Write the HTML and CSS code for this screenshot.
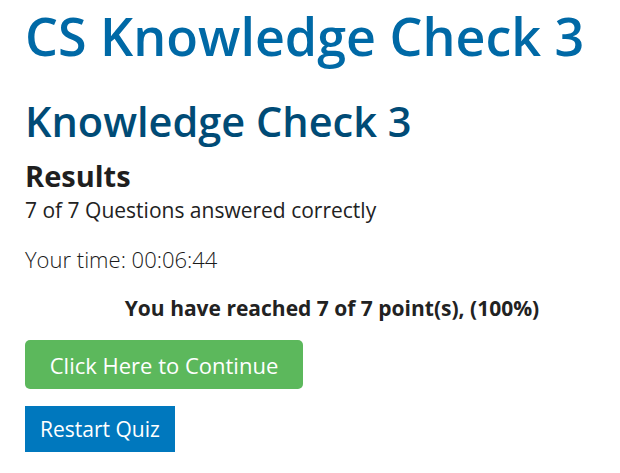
FILE: index.html
```html
<!DOCTYPE html>
<html lang="en">
<head>
<meta charset="utf-8">
<title>CS Knowledge Check 3</title>
<link rel="stylesheet" href="styles.css">
</head>
<body>
<main class="page">
  <h1 class="page-title">CS Knowledge Check 3</h1>
  <h2 class="quiz-title">Knowledge Check 3</h2>
  <section class="results">
    <h3 class="results-title">Results</h3>
    <p class="results-count">7 of 7 Questions answered correctly</p>
    <p class="results-time">Your time: 00:06:44</p>
    <p class="results-points">You have reached 7 of 7 point(s), (100%)</p>
    <div class="actions">
      <a class="btn btn-continue" href="#">Click Here to Continue</a>
      <button class="btn btn-restart" type="button">Restart Quiz</button>
    </div>
  </section>
</main>
</body>
</html>
```

FILE: styles.css
```css
html, body {
  margin: 0;
  padding: 0;
  background: #ffffff;
}

body {
  font-family: "Open Sans", "Noto Sans", sans-serif;
  color: #222222;
}

.page {
  padding: 5px 0 0 25px;
  width: 620px;
  box-sizing: border-box;
}

.page-title {
  margin: 0;
  font-size: 52px;
  line-height: 62px;
  font-weight: 600;
  color: #0069a6;
}

.quiz-title {
  margin: 28px 0 0;
  font-size: 41.5px;
  line-height: 52px;
  font-weight: 600;
  color: #004b76;
}

.results-title {
  margin: 12px 0 0;
  font-size: 29px;
  line-height: 34px;
  font-weight: 700;
  color: #1f1f1f;
}

.results-count {
  margin: 4px 0 0;
  font-size: 21px;
  line-height: 26px;
}

.results-time {
  margin: 23px 0 0;
  font-size: 22px;
  line-height: 26px;
  font-weight: 300;
  color: #1a1a1a;
}

.results-points {
  margin: 23px 0 0;
  padding-left: 19px;
  text-align: center;
  font-size: 21px;
  line-height: 26px;
  font-weight: 700;
}

.actions {
  display: flex;
  flex-direction: column;
  align-items: flex-start;
  gap: 17px;
  margin-top: 19px;
}

.btn {
  display: inline-flex;
  align-items: center;
  justify-content: center;
  box-sizing: border-box;
  border: 0;
  padding: 0;
  font-family: inherit;
  color: #ffffff;
  text-decoration: none;
  cursor: pointer;
}

.btn-continue {
  width: 278px;
  height: 49px;
  font-size: 22px;
  background: #5cb85c;
  border-radius: 5px;
}

.btn-restart {
  width: 150px;
  height: 46px;
  font-size: 21px;
  background: #0078be;
  border-radius: 0;
}
```
